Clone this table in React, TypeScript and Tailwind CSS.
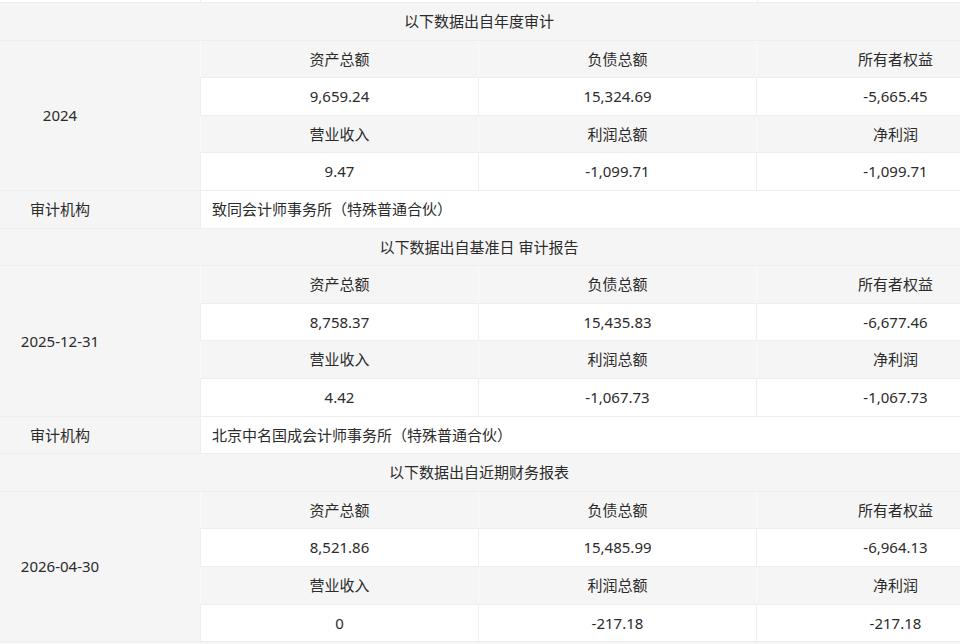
import React from "react";

type Block = {
  title: string;
  date: string;
  vals: [string, string, string, string, string, string];
  auditor?: string;
};

const blocks: Block[] = [
  {
    title: "以下数据出自年度审计",
    date: "2024",
    vals: ["9,659.24", "15,324.69", "-5,665.45", "9.47", "-1,099.71", "-1,099.71"],
    auditor: "致同会计师事务所（特殊普通合伙）",
  },
  {
    title: "以下数据出自基准日 审计报告",
    date: "2025-12-31",
    vals: ["8,758.37", "15,435.83", "-6,677.46", "4.42", "-1,067.73", "-1,067.73"],
    auditor: "北京中名国成会计师事务所（特殊普通合伙）",
  },
  {
    title: "以下数据出自近期财务报表",
    date: "2026-04-30",
    vals: ["8,521.86", "15,485.99", "-6,964.13", "0", "-217.18", "-217.18"],
  },
];

function Row({ cells, gray }: { cells: string[]; gray?: boolean }) {
  return (
    <div
      className={`grid grid-cols-3 h-[37.6px] border-b border-[#eeeeee] ${
        gray ? "bg-[#f5f5f5]" : "bg-white"
      }`}
    >
      {cells.map((c, i) => (
        <div
          key={i}
          className={`flex items-center justify-center border-l ${
            gray ? "border-[#fafafa]" : "border-[#eeeeee]"
          }`}
        >
          {c}
        </div>
      ))}
    </div>
  );
}

export default function App() {
  return (
    <div className="w-[960px] h-[644px] overflow-hidden bg-white">
      <div
        className="w-[1034px] text-[15px] text-[#2b2b2b]"
        style={{ fontFamily: '"Noto Sans", "Noto Sans CJK SC", sans-serif' }}
      >
        <div className="h-[3px] border-b border-[#eeeeee] flex">
          <div className="w-[200px]" />
          <div className="w-[278px] border-l border-[#eeeeee]" />
          <div className="w-[279px]" />
          <div className="flex-1 border-l border-[#eeeeee]" />
        </div>

        {blocks.map((b) => (
          <div key={b.date}>
            <div className="h-[37.6px] bg-[#f5f5f5] border-b border-[#eeeeee] flex items-center">
              <div className="w-[958px] text-center">{b.title}</div>
            </div>

            <div className="flex">
              <div className="w-[200px] h-[150.4px] bg-[#f5f5f5] border-b border-[#eeeeee] flex items-center">
                <div className="w-[120px] text-center">{b.date}</div>
              </div>
              <div className="flex-1">
                <Row gray cells={["资产总额", "负债总额", "所有者权益"]} />
                <Row cells={b.vals.slice(0, 3)} />
                <Row gray cells={["营业收入", "利润总额", "净利润"]} />
                <Row cells={b.vals.slice(3, 6)} />
              </div>
            </div>

            {b.auditor && (
              <div className="flex h-[37.6px] border-b border-[#eeeeee]">
                <div className="w-[200px] bg-[#f5f5f5] flex items-center">
                  <div className="w-[120px] text-center">审计机构</div>
                </div>
                <div className="flex-1 bg-white border-l border-[#eeeeee] flex items-center pl-[11px]">
                  {b.auditor}
                </div>
              </div>
            )}
          </div>
        ))}

        <div className="h-[37.6px] bg-[#f5f5f5]" />
      </div>
    </div>
  );
}
